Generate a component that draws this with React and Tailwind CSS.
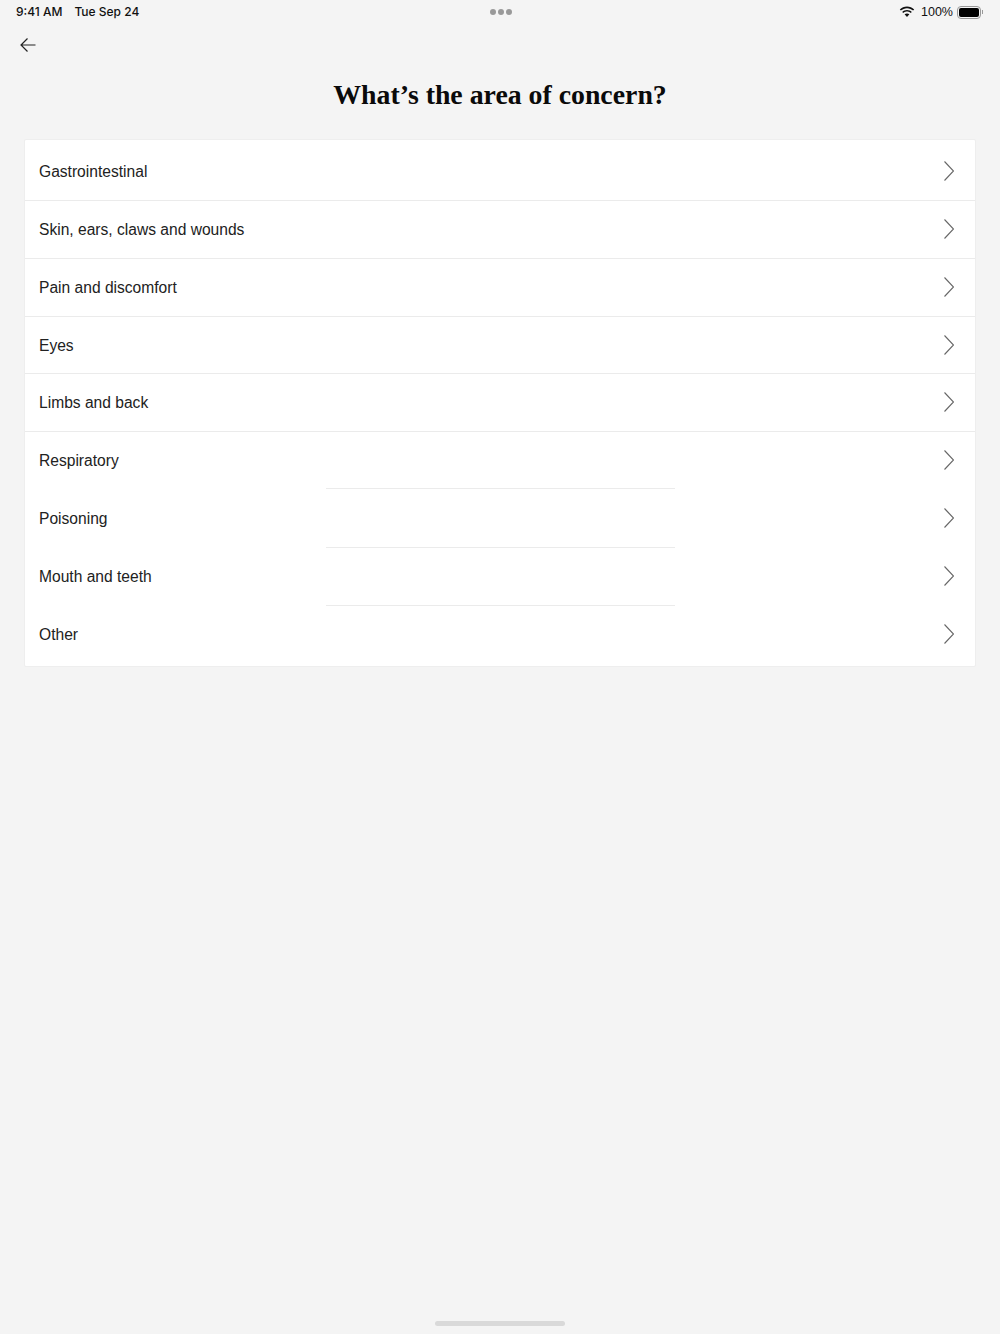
const rows = [
  { label: 'Gastrointestinal', h: 'h-[61px]', line: 'full' },
  { label: 'Skin, ears, claws and wounds', h: 'h-[58px] pb-[2px]', line: 'full' },
  { label: 'Pain and discomfort', h: 'h-[58px] pb-[2px]', line: 'full' },
  { label: 'Eyes', h: 'h-[57px] pb-[2px]', line: 'full' },
  { label: 'Limbs and back', h: 'h-[58px] pb-[2px]', line: 'full' },
  { label: 'Respiratory', h: 'h-[57px] pb-[2px]', line: 'short' },
  { label: 'Poisoning', h: 'h-[59px] pb-[2px]', line: 'short' },
  { label: 'Mouth and teeth', h: 'h-[58px] pb-[2px]', line: 'short' },
  { label: 'Other', h: 'h-[60px] pb-[4px]', line: 'none' },
]

function Row({ label, h, line }) {
  return (
    <div className={`relative flex items-center justify-between pl-[14px] pr-[21px] ${h}`}>
      <span className="pt-[2px] text-[15.6px] text-[#222222]">{label}</span>
      <svg width="10" height="20" viewBox="0 0 10 20" fill="none" className="text-[#666666]">
        <path d="M0.5 0.5 L9.5 10 L0.5 19.500" stroke="currentColor" strokeWidth="1.1" />
      </svg>
      {line === 'full' && <div className="absolute bottom-0 left-0 right-0 h-px bg-[#ebebeb]" />}
      {line === 'short' && <div className="absolute bottom-0 left-[301px] w-[349px] h-px bg-[#ebebeb]" />}
    </div>
  )
}

export default function App() {
  return (
    <div className="relative h-[1334px] bg-[#f4f4f4] font-['Liberation_Sans',sans-serif]">
      {/* status bar */}
      <div className="relative flex items-center justify-between h-6 pl-4 pr-[17px] text-[#111111]">
        <div className="flex gap-[12px] font-['Inter',sans-serif] font-medium text-[12px]">
          <span>9:41 AM</span>
          <span>Tue Sep 24</span>
        </div>
        <div className="absolute left-[490px] top-[9px] flex gap-[2px]">
          <span className="w-[6px] h-[6px] rounded-full bg-[#999999]" />
          <span className="w-[6px] h-[6px] rounded-full bg-[#999999]" />
          <span className="w-[6px] h-[6px] rounded-full bg-[#999999]" />
        </div>
        <div className="flex items-center gap-[4px] text-[12.500px]">
          <svg width="16" height="12" viewBox="0 0 16 12" className="mr-[2px]">
            <path d="M8 2.2c2.4 0 4.5.9 6.1 2.400l1.100-1.200C13.300 1.500 10.800.500 8 .500S2.700 1.500.800 3.400l1.100 1.200C3.500 3.100 5.600 2.200 8 2.200z" fill="#111" />
            <path d="M8 5.600c1.400 0 2.700.5 3.700 1.500l1.100-1.200C11.500 4.700 9.800 4 8 4s-3.500.7-4.800 1.900l1.100 1.200c1-1 2.300-1.500 3.700-1.500z" fill="#111" />
            <path d="M8 7.400c-.9 0-1.700.3-2.400.9L8 11l2.400-2.700c-.7-.6-1.500-.9-2.400-.9z" fill="#111" />
          </svg>
          <span>100%</span>
          <div className="flex items-center">
            <div className="w-[24px] h-[13px] rounded-[4px] border border-[#999999] p-[1px]">
              <div className="w-full h-full rounded-[2px] bg-black" />
            </div>
            <div className="w-[1px] h-[4px] bg-[#999999] ml-[1px]" />
          </div>
        </div>
      </div>

      {/* back */}
      <div className="pl-[20px] mt-[14px] h-[14px]">
        <svg width="16" height="14" viewBox="0 0 16 14" fill="none" className="text-[#222222]">
          <path d="M15.500 7 H1 M7.500 0.500 L1 7 L7.500 13.500" stroke="currentColor" strokeWidth="1.200" />
        </svg>
      </div>

      <h1 className="mt-[28px] h-[30px] text-center text-[27.8px] leading-[30px] font-bold text-[#0a0a0a] font-['Liberation_Serif',serif]">
        What’s the area of concern?
      </h1>

      {/* list */}
      <div className="mx-6 mt-[29px] bg-white border border-[#eeeeee] rounded-[2px]">
        {rows.map(r => (
          <Row key={r.label} {...r} />
        ))}
      </div>

      <div className="absolute left-[435px] bottom-[8px] w-[130px] h-[5px] rounded-full bg-[#d9d9d9]" />
    </div>
  )
}
